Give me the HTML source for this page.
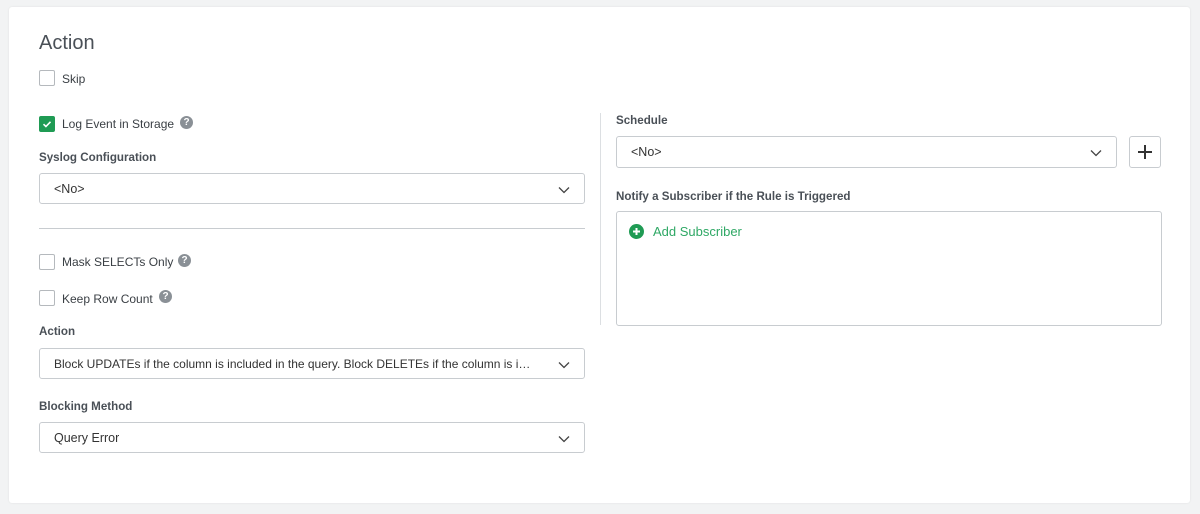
<!DOCTYPE html>
<html><head><style>
body{margin:0;width:1200px;height:514px;background:#f2f3f4;font-family:"Liberation Sans",sans-serif;color:#3a3f44;position:relative;overflow:hidden}
.card{position:absolute;left:9px;top:7px;width:1181px;height:496px;background:#fff;border-radius:3px;box-shadow:0 0 2px rgba(0,0,0,.08)}
.a{position:absolute}
h1{position:absolute;left:39px;top:32px;margin:0;font-weight:normal;font-size:20px;color:#4a5057}
.cb{position:absolute;width:14px;height:14px;border:1px solid #b5b9bd;border-radius:2px;background:#fff}
.cb.on{background:#1f9b54;border-color:#1f9b54}
.lbl{position:absolute;font-size:12px;color:#3a3f44}
.flab{position:absolute;font-size:11.6px;font-weight:bold;color:#4a5057}
.sel{position:absolute;height:31px;border:1px solid #c8ccd0;border-radius:3px;background:#fff;font-size:12.5px;line-height:31px;padding-left:14px;box-sizing:border-box;color:#333;white-space:nowrap;overflow:hidden}
.sel span{display:inline-block;max-width:calc(100% - 50px);overflow:hidden;text-overflow:ellipsis;vertical-align:top}
.chev{position:absolute;right:14px;top:12px}
.q{position:absolute;width:13px;height:13px;border-radius:50%;background:#8a9096;color:#fff;font-size:10px;font-weight:bold;text-align:center;line-height:13px}
</style></head><body>
<div class="card"></div>
<h1>Action</h1>
<div class="cb" style="left:39px;top:70px"></div><div class="lbl" style="left:62px;top:72px">Skip</div>
<div class="cb on" style="left:39px;top:116px"><svg width="14" height="14" viewBox="0 0 14 14"><path d="M3.5 7.2l2.4 2.3 4.6-4.7" stroke="#fff" stroke-width="1.6" fill="none"/></svg></div>
<div class="lbl" style="left:62px;top:117px">Log Event in Storage</div><div class="q" style="left:180px;top:116px">?</div>
<div class="flab" style="left:39px;top:151px">Syslog Configuration</div>
<div class="sel" style="left:39px;top:173px;width:546px"><span>&lt;No&gt;</span><svg class="chev" width="12" height="8" viewBox="0 0 12 8"><path d="M1 1.5l5 5 5-5" stroke="#444" stroke-width="1.3" fill="none"/></svg></div>
<div class="a" style="left:39px;top:228px;width:546px;height:1px;background:#c8ccd0"></div>
<div class="cb" style="left:39px;top:254px"></div><div class="lbl" style="left:62px;top:255px">Mask SELECTs Only</div><div class="q" style="left:178px;top:254px">?</div>
<div class="cb" style="left:39px;top:290px"></div><div class="lbl" style="left:62px;top:292px">Keep Row Count</div><div class="q" style="left:159px;top:290px">?</div>
<div class="flab" style="left:39px;top:325px">Action</div>
<div class="sel" style="left:39px;top:348px;width:546px"><span style="font-size:12px">Block UPDATEs if the column is included in the query. Block DELETEs if the column is included</span><svg class="chev" width="12" height="8" viewBox="0 0 12 8"><path d="M1 1.5l5 5 5-5" stroke="#444" stroke-width="1.3" fill="none"/></svg></div>
<div class="flab" style="left:39px;top:400px">Blocking Method</div>
<div class="sel" style="left:39px;top:422px;width:546px"><span>Query Error</span><svg class="chev" width="12" height="8" viewBox="0 0 12 8"><path d="M1 1.5l5 5 5-5" stroke="#444" stroke-width="1.3" fill="none"/></svg></div>
<div class="a" style="left:600px;top:113px;width:1px;height:212px;background:#dcdfe2"></div>
<div class="flab" style="left:616px;top:114px">Schedule</div>
<div class="sel" style="left:616px;top:136px;width:501px;height:32px"><span>&lt;No&gt;</span><svg class="chev" width="12" height="8" viewBox="0 0 12 8"><path d="M1 1.5l5 5 5-5" stroke="#444" stroke-width="1.3" fill="none"/></svg></div>
<div class="a" style="left:1129px;top:136px;width:32px;height:32px;border:1px solid #c8ccd0;border-radius:3px;box-sizing:border-box"><svg width="30" height="30" viewBox="0 0 30 30"><path d="M15 8v14M8 15h14" stroke="#333" stroke-width="2"/></svg></div>
<div class="flab" style="left:616px;top:190px">Notify a Subscriber if the Rule is Triggered</div>
<div class="a" style="left:616px;top:211px;width:546px;height:115px;border:1px solid #c8ccd0;border-radius:3px;box-sizing:border-box"></div>
<svg class="a" style="left:629px;top:224px" width="15" height="15" viewBox="0 0 15 15"><circle cx="7.5" cy="7.5" r="7.5" fill="#1f9b54"/><path d="M7.5 4v7M4 7.5h7" stroke="#fff" stroke-width="2"/></svg>
<div class="lbl" style="left:653px;top:224px;font-size:13px;color:#2fa865">Add Subscriber</div>
</body></html>
